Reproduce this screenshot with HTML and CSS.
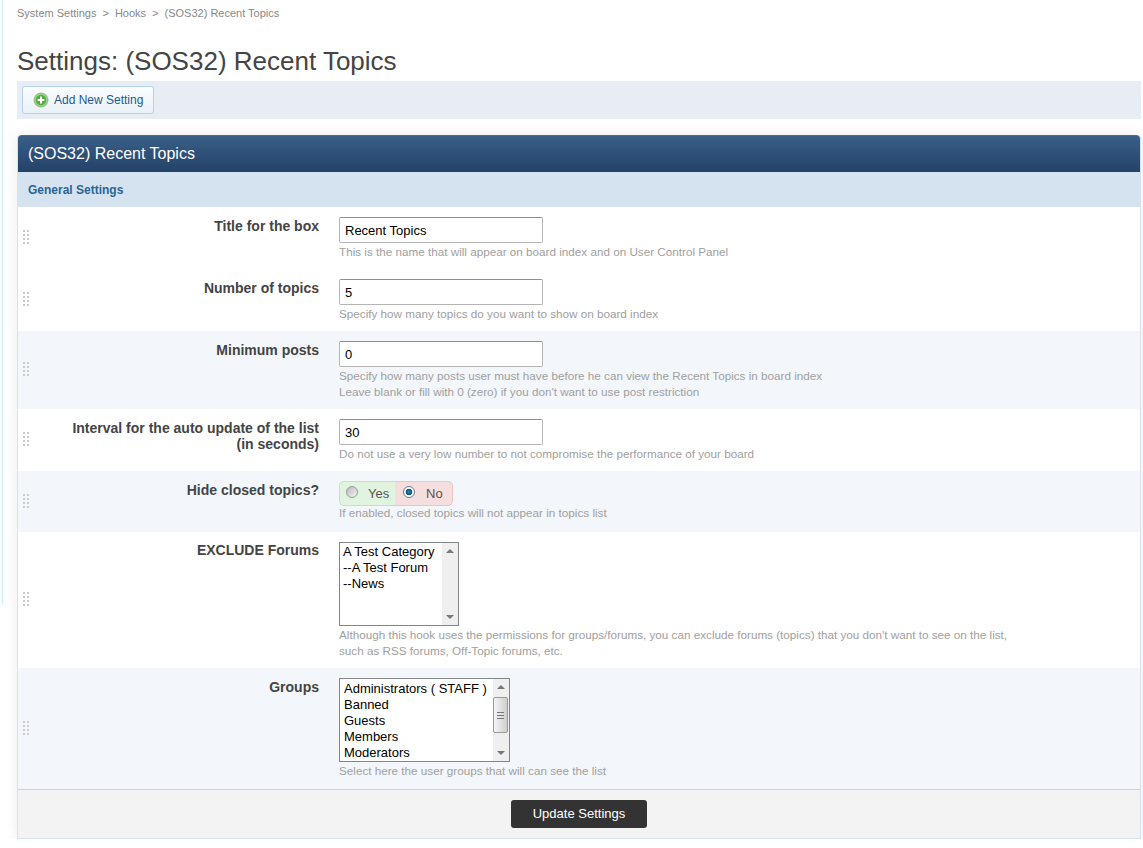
FILE: index.html
```html
<!DOCTYPE html>
<html lang="en">

<head>
    <meta charset="UTF-8">
    <meta name="viewport" content="width=device-width, initial-scale=1.0">
    <title>Settings: (SOS32) Recent Topics</title>
    <link rel="stylesheet" href="styles.css">
</head>

<body>
    <div class="side-strip"></div>
    <div class="breadcrumb">
        <span>System Settings</span><span class="sep">&gt;</span><span>Hooks</span><span class="sep">&gt;</span><span>(SOS32) Recent Topics</span>
    </div>
    <h1>Settings: (SOS32) Recent Topics</h1>
    <div class="toolbar">
        <a class="tool-button" href="#">
            <svg width="16" height="16" viewBox="0 0 16 16">
                <circle cx="8" cy="8" r="7" fill="#9fd08c" stroke="#7fb36c" stroke-width="0.8" />
                <circle cx="8" cy="8" r="5.2" fill="#55ad42" />
                <path d="M8 4.6v6.8M4.6 8h6.8" stroke="#fff" stroke-width="2" />
            </svg>
            Add New Setting
        </a>
    </div>

    <div class="panel">
        <div class="panel-title">(SOS32) Recent Topics</div>
        <div class="panel-section">General Settings</div>

        <div class="row row-title">
            <div class="grip"></div>
            <div class="row-label">Title for the box</div>
            <div class="row-field">
                <input class="text-input" type="text" value="Recent Topics">
                <div class="help">This is the name that will appear on board index and on User Control Panel</div>
            </div>
        </div>

        <div class="row row-title">
            <div class="grip"></div>
            <div class="row-label">Number of topics</div>
            <div class="row-field">
                <input class="text-input" type="text" value="5">
                <div class="help">Specify how many topics do you want to show on board index</div>
            </div>
        </div>

        <div class="row alt row-min">
            <div class="grip"></div>
            <div class="row-label">Minimum posts</div>
            <div class="row-field">
                <input class="text-input" type="text" value="0">
                <div class="help">Specify how many posts user must have before he can view the Recent Topics in board index<br>Leave blank or fill with 0 (zero) if you don't want to use post restriction</div>
            </div>
        </div>

        <div class="row row-title">
            <div class="grip"></div>
            <div class="row-label">Interval for the auto update of the list<br>(in seconds)</div>
            <div class="row-field">
                <input class="text-input" type="text" value="30">
                <div class="help">Do not use a very low number to not compromise the performance of your board</div>
            </div>
        </div>

        <div class="row alt row-yesno">
            <div class="grip"></div>
            <div class="row-label">Hide closed topics?</div>
            <div class="row-field">
                <div class="yesno">
                    <span class="yes"><i class="radio"></i>Yes</span><span class="no"><i class="radio checked"></i>No</span>
                </div>
                <div class="help">If enabled, closed topics will not appear in topics list</div>
            </div>
        </div>

        <div class="row row-forums">
            <div class="grip"></div>
            <div class="row-label">EXCLUDE Forums</div>
            <div class="row-field">
                <div class="listbox listbox-forums">
                    <div class="list-items">
                        <div>A Test Category</div>
                        <div>--A Test Forum</div>
                        <div>--News</div>
                    </div>
                    <div class="scrollbar">
                        <span class="arrow up"></span>
                        <span class="arrow down"></span>
                    </div>
                </div>
                <div class="help">Although this hook uses the permissions for groups/forums, you can exclude forums (topics) that you don't want to see on the list,<br>such as RSS forums, Off-Topic forums, etc.</div>
            </div>
        </div>

        <div class="row alt row-groups">
            <div class="grip"></div>
            <div class="row-label">Groups</div>
            <div class="row-field">
                <div class="listbox listbox-groups">
                    <div class="list-items">
                        <div>Administrators ( STAFF )</div>
                        <div>Banned</div>
                        <div>Guests</div>
                        <div>Members</div>
                        <div>Moderators</div>
                    </div>
                    <div class="scrollbar">
                        <span class="arrow up"></span>
                        <span class="thumb"></span>
                        <span class="arrow down"></span>
                    </div>
                </div>
                <div class="help">Select here the user groups that will can see the list</div>
            </div>
        </div>

        <div class="panel-footer">
            <button class="submit" type="button">Update Settings</button>
        </div>
    </div>
</body>

</html>
```

FILE: styles.css
```css
body {
    margin: 0;
    padding: 0 2px 0 17px;
    background-color: #fff;
    font-family: "Liberation Sans", Arial, sans-serif;
    color: #333;
}

.side-strip {
    position: absolute;
    left: 0;
    top: 0;
    width: 2px;
    height: 605px;
    background-color: #f6fcff;
    border-right: 1px solid #cdeefc;
}

.breadcrumb {
    height: 27px;
    line-height: 27px;
    font-size: 11px;
    color: #888;
}

.breadcrumb .sep {
    margin: 0 6px;
}

h1 {
    margin: 0;
    height: 54px;
    line-height: 68px;
    font-size: 26px;
    font-weight: normal;
    color: #444;
}

.toolbar {
    height: 38px;
    margin-bottom: 16px;
    padding: 5px;
    box-sizing: border-box;
    background-color: #e8ecf4;
}

.tool-button {
    display: inline-flex;
    align-items: center;
    gap: 5px;
    height: 28px;
    padding: 0 10px;
    box-sizing: border-box;
    border: 1px solid #b0d4f0;
    border-radius: 3px;
    background: linear-gradient(#fbfdfe, #e9f1f8);
    color: #1d5a8e;
    font-size: 12px;
    text-decoration: none;
}

.panel {
    border: 1px solid #d5e2ef;
    border-top: 0;
    border-radius: 4px 4px 0 0;
    box-shadow: 0 0 14px rgba(0, 0, 0, 0.08);
}

.panel-title {
    height: 37px;
    padding-left: 10px;
    border-top: 1px solid #44699a;
    border-radius: 4px 4px 0 0;
    box-sizing: border-box;
    background: linear-gradient(#3a5f88, #234268);
    color: #fff;
    font-size: 16px;
    line-height: 36px;
}

.panel-section {
    height: 35px;
    padding-left: 10px;
    background-color: #d5e3f1;
    color: #2a6496;
    font-size: 12px;
    font-weight: bold;
    line-height: 36px;
}

.row {
    display: grid;
    grid-template-columns: 12px 269px 1fr;
    column-gap: 20px;
    box-sizing: border-box;
    padding-top: 10px;
}

.row.alt {
    background-color: #f3f7fb;
}

.row-title {
    height: 62px;
}

.row-min {
    height: 78px;
}

.row-yesno {
    height: 61px;
}

.row-forums {
    height: 136px;
}

.row-groups {
    height: 121px;
}

.grip {
    align-self: center;
    justify-self: end;
    width: 6px;
    height: 14px;
    margin: -12px 1px 0 0;
    background-image: conic-gradient(#ccc 25%, transparent 0);
    background-position: -2px 0;
    background-size: 4px 4px;
}

.row-label {
    font-size: 14px;
    line-height: 16px;
    font-weight: bold;
    color: #444;
    text-align: right;
    padding-top: 1px;
}

.row-forums .row-label {
    padding-top: 0;
}

.text-input {
    display: block;
    width: 204px;
    height: 26px;
    padding: 0 5px;
    box-sizing: border-box;
    border: 1px solid #b5b5b5;
    border-top-color: #8e8e8e;
    border-radius: 2px;
    background-color: #fff;
    font-family: inherit;
    font-size: 13px;
    color: #000;
}

.help {
    margin-top: 1px;
    font-size: 11.7px;
    line-height: 16px;
    color: #a0a0a0;
}

.yesno {
    display: flex;
    width: 114px;
    height: 25px;
    margin-bottom: -2px;
    font-size: 13px;
    line-height: 25px;
    color: #555;
}

.yesno span {
    display: flex;
    flex: 1;
    align-items: center;
    box-sizing: border-box;
    height: 25px;
    padding-left: 6px;
    gap: 10px;
}

.yes {
    border: 1px solid #c0e4c0;
    border-right: 0;
    border-radius: 5px 0 0 5px;
    background-color: #e0f4e0;
}

.yesno .no {
    padding-left: 8px;
    gap: 11px;
    border: 1px solid #ecc4c4;
    border-left: 0;
    border-radius: 0 5px 5px 0;
    background-color: #f5dede;
}

.radio {
    flex-shrink: 0;
    width: 12px;
    height: 12px;
    margin-bottom: 4px;
    box-sizing: border-box;
    border: 1px solid #999;
    border-radius: 50%;
    background: linear-gradient(135deg, #b8b8b8, #f6f6f6);
}

.radio.checked {
    border-color: #6a7a88;
    background: radial-gradient(circle, #2a8ac4 0, #0c4f7e 3px, #fff 3.6px);
}

.listbox {
    display: flex;
    box-sizing: border-box;
    height: 84px;
    border: 1px solid #82868c;
    background-color: #fff;
    font-size: 13px;
    line-height: 16px;
    color: #000;
}

.listbox-forums {
    width: 120px;
}

.listbox-groups {
    width: 171px;
}

.list-items {
    flex: 1;
    padding: 1px 0 0 3px;
}

.listbox-groups .list-items {
    padding: 2px 0 0 4px;
}

.scrollbar {
    display: flex;
    flex-direction: column;
    justify-content: space-between;
    width: 16px;
    background-color: #efefef;
    position: relative;
}

.arrow {
    display: block;
    width: 0;
    height: 0;
    margin: 6px auto;
    border-left: 4px solid transparent;
    border-right: 4px solid transparent;
}

.arrow.up {
    border-bottom: 4px solid #777;
}

.arrow.down {
    border-top: 4px solid #777;
}

.thumb {
    position: absolute;
    top: 18px;
    left: 0;
    width: 15px;
    height: 36px;
    box-sizing: border-box;
    border: 1px solid #999;
    border-radius: 2px;
    background: repeating-linear-gradient(#777 0 1px, transparent 1px 3px) center / 7px 7px no-repeat, linear-gradient(90deg, #f4f4f4, #cfcfcf);
}

.panel-footer {
    display: flex;
    justify-content: center;
    align-items: center;
    height: 49px;
    box-sizing: border-box;
    border-top: 1px solid #d2d2d2;
    background-color: #f3f3f3;
}

.submit {
    width: 136px;
    height: 28px;
    padding: 0 0 2px;
    border: 0;
    border-radius: 3px;
    background-color: #333;
    color: #fff;
    font-family: inherit;
    font-size: 13px;
}
```
